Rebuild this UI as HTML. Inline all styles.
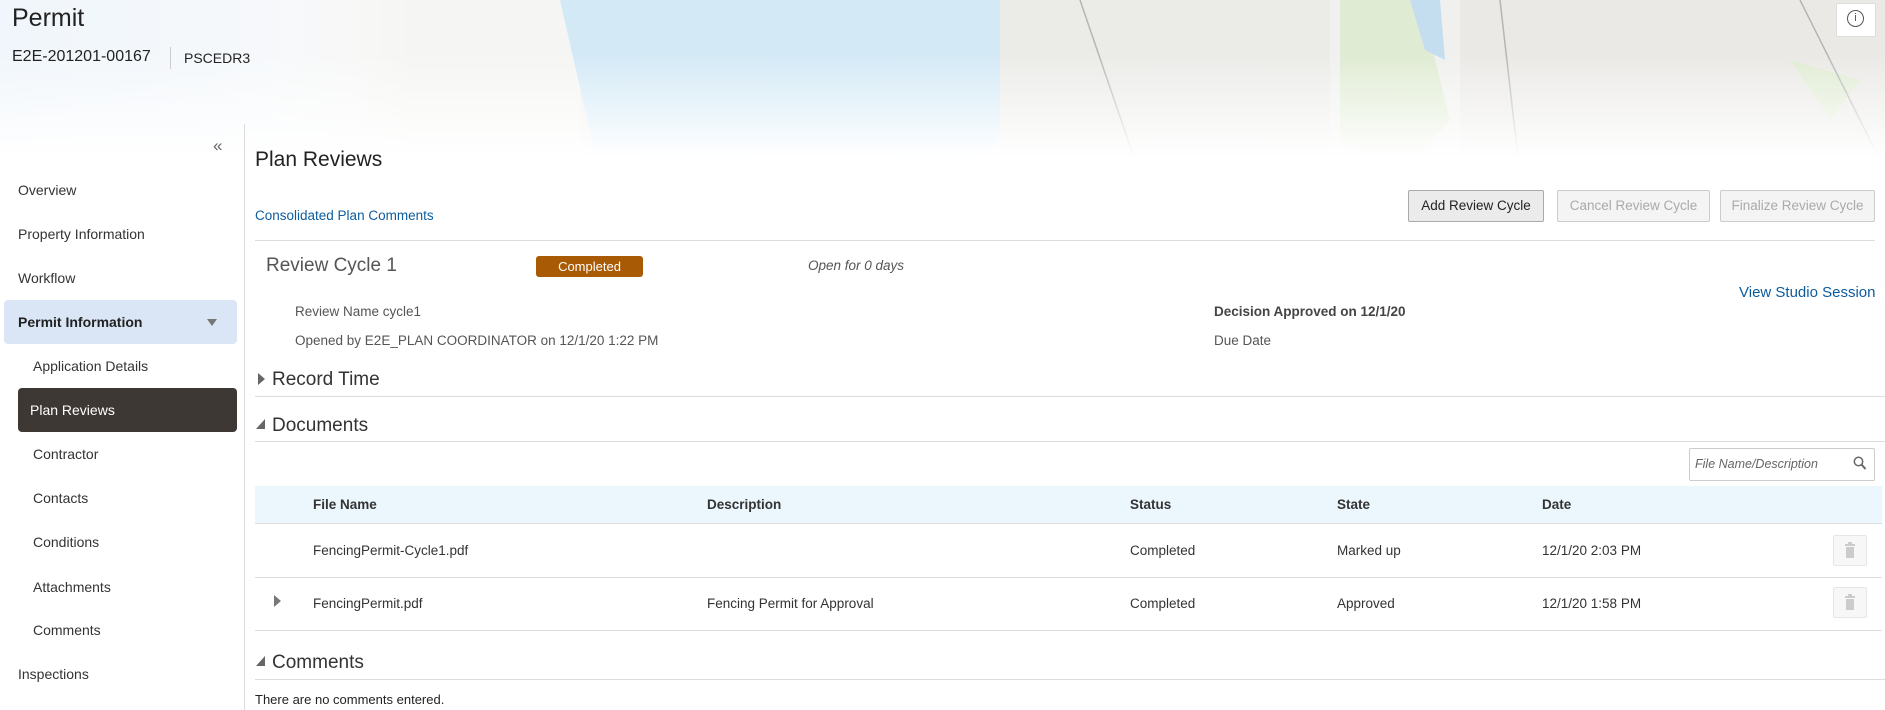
<!DOCTYPE html>
<html><head><meta charset="utf-8"><style>
*{box-sizing:border-box;margin:0;padding:0}
body{width:1885px;height:710px;overflow:hidden;background:#fff;font-family:"Liberation Sans",sans-serif;color:#333;position:relative}
.abs{position:absolute;white-space:nowrap}
.map{position:absolute;left:0;top:0;width:1885px;height:175px;overflow:hidden}
.nav{font-size:14px;color:#333}
.line{position:absolute;height:1px;background:#dcdcdc}
.btn{position:absolute;height:32px;border:1px solid #ccc;border-radius:2px;background:#f4f4f4;font-size:13.5px;color:#aaa;text-align:center;line-height:30px}
.th{position:absolute;top:497px;font-size:13.5px;font-weight:bold;color:#333}
.td{position:absolute;font-size:13.5px;color:#333}
.trash{position:absolute;left:1833px;width:34px;height:31px;border:1px solid #e6e6e6;background:#f7f7f7;border-radius:2px}
</style></head><body>
<div class="map">
<svg width="1885" height="175" viewBox="0 0 1885 175">
<defs>
<linearGradient id="fade" x1="0" y1="0" x2="0" y2="1"><stop offset="0.3" stop-color="#fff" stop-opacity="0"/><stop offset="0.9" stop-color="#fff" stop-opacity="1"/></linearGradient>
<linearGradient id="lf" x1="0" y1="0" x2="1" y2="0"><stop offset="0" stop-color="#f0f6fb" stop-opacity="1"/><stop offset="0.14" stop-color="#f6f9fc" stop-opacity="0.9"/><stop offset="0.22" stop-color="#fff" stop-opacity="0"/></linearGradient>
</defs>
<rect width="1885" height="175" fill="#f0f0ee"/>
<rect x="230" width="350" height="175" fill="#f5f5f3"/>
<path d="M560 0 H1080 L1060 60 L1020 120 L960 175 H600 Z" fill="#d3e9f6"/>
<rect x="1000" y="0" width="330" height="175" fill="#ebebe8"/>
<path d="M1340 0 L1420 0 L1450 120 L1400 175 L1340 140 Z" fill="#dfebd2"/>
<path d="M1410 0 L1440 0 L1445 60 L1425 50 Z" fill="#c4def0"/>
<rect x="1460" y="0" width="425" height="175" fill="#eae9e6"/>
<path d="M1790 60 L1860 80 L1830 120 Z" fill="#dfebd2"/>
<path d="M1080 0 L1140 175 M1500 0 L1520 175 M1800 0 L1885 170" stroke="#b5b5b5" stroke-width="1.5" fill="none"/>
<rect width="1885" height="175" fill="url(#lf)"/>
<rect width="1885" height="175" fill="url(#fade)"/>
</svg>
</div>
<div class="abs" style="left:1836px;top:3px;width:40px;height:34px;background:#fff;border:1px solid #ddd"></div>
<div class="abs" style="left:1847px;top:10px;width:17px;height:17px;border:1.5px solid #555;border-radius:50%;font-size:11px;text-align:center;line-height:14px;color:#555">i</div>

<div class="abs" style="left:12px;top:4px;font-size:25px;color:#222">Permit</div>
<div class="abs" style="left:12px;top:48px;font-size:16px;color:#222">E2E-201201-00167</div>
<div class="abs" style="left:170px;top:47px;width:1px;height:22px;background:#ccc"></div>
<div class="abs" style="left:184px;top:50px;font-size:14px;color:#222">PSCEDR3</div>

<div class="abs" style="left:244px;top:124px;width:1px;height:586px;background:#ddd"></div>
<div class="abs" style="left:213px;top:136px;font-size:17px;color:#666">«</div>
<div class="abs nav" style="left:18px;top:182px">Overview</div>
<div class="abs nav" style="left:18px;top:226px">Property Information</div>
<div class="abs nav" style="left:18px;top:270px">Workflow</div>
<div class="abs" style="left:4px;top:300px;width:233px;height:44px;background:#dae6f6;border-radius:4px"></div>
<div class="abs nav" style="left:18px;top:314px;font-weight:bold;color:#222">Permit Information</div>
<div class="abs" style="left:207px;top:319px;width:0;height:0;border-left:5px solid transparent;border-right:5px solid transparent;border-top:7px solid #777"></div>
<div class="abs nav" style="left:33px;top:358px">Application Details</div>
<div class="abs" style="left:18px;top:388px;width:219px;height:44px;background:#3e3835;border-radius:4px"></div>
<div class="abs nav" style="left:30px;top:402px;color:#fff">Plan Reviews</div>
<div class="abs nav" style="left:33px;top:446px">Contractor</div>
<div class="abs nav" style="left:33px;top:490px">Contacts</div>
<div class="abs nav" style="left:33px;top:534px">Conditions</div>
<div class="abs nav" style="left:33px;top:579px">Attachments</div>
<div class="abs nav" style="left:33px;top:622px">Comments</div>
<div class="abs nav" style="left:18px;top:666px">Inspections</div>

<div class="abs" style="left:255px;top:148px;font-size:21px;color:#222">Plan Reviews</div>
<div class="abs" style="left:255px;top:208px;font-size:13.5px;color:#0d5c9e">Consolidated Plan Comments</div>
<div class="btn" style="left:1408px;top:190px;width:136px;background:#ebebeb;border-color:#aaa;color:#222">Add Review Cycle</div>
<div class="btn" style="left:1557px;top:190px;width:153px">Cancel Review Cycle</div>
<div class="btn" style="left:1720px;top:190px;width:155px">Finalize Review Cycle</div>
<div class="line" style="left:255px;top:240px;width:1620px"></div>

<div class="abs" style="left:266px;top:255px;font-size:19px;color:#555">Review Cycle 1</div>
<div class="abs" style="left:536px;top:256px;width:107px;height:21px;background:#a95a04;border-radius:3px;color:#fff;font-size:13px;text-align:center;line-height:21px">Completed</div>
<div class="abs" style="left:808px;top:258px;font-size:13.5px;font-style:italic;color:#555">Open for 0 days</div>
<div class="abs" style="left:1739px;top:284px;font-size:15px;color:#0d5c9e">View Studio Session</div>
<div class="abs" style="left:295px;top:304px;font-size:13.5px;color:#555">Review Name cycle1</div>
<div class="abs" style="left:1214px;top:304px;font-size:13.5px;font-weight:bold;color:#444">Decision Approved on 12/1/20</div>
<div class="abs" style="left:295px;top:333px;font-size:13.5px;color:#555">Opened by E2E_PLAN COORDINATOR on 12/1/20 1:22 PM</div>
<div class="abs" style="left:1214px;top:333px;font-size:13.5px;color:#555">Due Date</div>

<div class="abs" style="left:258px;top:373px;width:0;height:0;border-top:6px solid transparent;border-bottom:6px solid transparent;border-left:7px solid #666"></div>
<div class="abs" style="left:272px;top:369px;font-size:19px;color:#333">Record Time</div>
<div class="line" style="left:255px;top:396px;width:1630px"></div>
<div class="abs" style="left:256px;top:419px;width:0;height:0;border-top:10px solid transparent;border-right:9px solid #666"></div>
<div class="abs" style="left:272px;top:415px;font-size:19px;color:#333">Documents</div>
<div class="line" style="left:255px;top:441px;width:1630px"></div>

<div class="abs" style="left:1689px;top:448px;width:186px;height:33px;border:1px solid #ccc;border-radius:2px"></div>
<div class="abs" style="left:1695px;top:457px;font-size:12.5px;font-style:italic;color:#666">File Name/Description</div>
<svg class="abs" style="left:1853px;top:456px" width="14" height="16" viewBox="0 0 14 16"><circle cx="5.5" cy="5.5" r="4.2" fill="none" stroke="#666" stroke-width="1.5"/><path d="M8.5 8.5 L12.5 13" stroke="#666" stroke-width="2"/></svg>

<div class="abs" style="left:255px;top:486px;width:1627px;height:37px;background:#ebf6fd"></div>
<div class="line" style="left:255px;top:523px;width:1627px"></div>
<div class="th" style="left:313px">File Name</div>
<div class="th" style="left:707px">Description</div>
<div class="th" style="left:1130px">Status</div>
<div class="th" style="left:1337px">State</div>
<div class="th" style="left:1542px">Date</div>

<div class="td" style="left:313px;top:543px">FencingPermit-Cycle1.pdf</div>
<div class="td" style="left:1130px;top:543px">Completed</div>
<div class="td" style="left:1337px;top:543px">Marked up</div>
<div class="td" style="left:1542px;top:543px">12/1/20 2:03 PM</div>
<div class="trash" style="top:535px"></div>
<div class="line" style="left:255px;top:577px;width:1627px"></div>
<div class="abs" style="left:274px;top:595px;width:0;height:0;border-top:6px solid transparent;border-bottom:6px solid transparent;border-left:7px solid #777"></div>
<div class="td" style="left:313px;top:596px">FencingPermit.pdf</div>
<div class="td" style="left:707px;top:596px">Fencing Permit for Approval</div>
<div class="td" style="left:1130px;top:596px">Completed</div>
<div class="td" style="left:1337px;top:596px">Approved</div>
<div class="td" style="left:1542px;top:596px">12/1/20 1:58 PM</div>
<div class="trash" style="top:587px"></div>
<div class="line" style="left:255px;top:630px;width:1627px"></div>
<svg class="abs" style="left:1844px;top:542px" width="12" height="16"><rect x="1" y="2" width="10" height="2" fill="#ccc"/><rect x="4" y="0" width="4" height="2" fill="#ccc"/><rect x="2" y="5" width="8" height="11" fill="#ccc"/></svg>
<svg class="abs" style="left:1844px;top:594px" width="12" height="16"><rect x="1" y="2" width="10" height="2" fill="#ccc"/><rect x="4" y="0" width="4" height="2" fill="#ccc"/><rect x="2" y="5" width="8" height="11" fill="#ccc"/></svg>

<div class="abs" style="left:256px;top:656px;width:0;height:0;border-top:10px solid transparent;border-right:9px solid #666"></div>
<div class="abs" style="left:272px;top:652px;font-size:19px;color:#333">Comments</div>
<div class="line" style="left:255px;top:679px;width:1630px"></div>
<div class="abs" style="left:255px;top:692px;font-size:13px;color:#222">There are no comments entered.</div>
</body></html>
